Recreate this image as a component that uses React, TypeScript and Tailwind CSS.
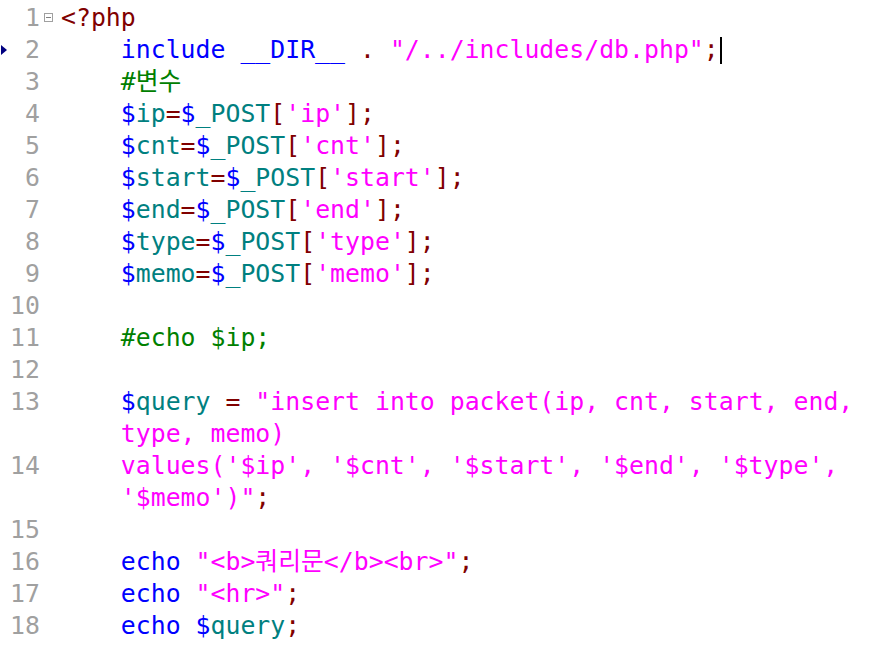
import React from "react";

type Tok = [string, string];

const R = "text-[#800000]";
const B = "text-[#0000ff]";
const T = "text-[#008080]";
const M = "text-[#ff00ff]";
const G = "text-[#008000]";

const post = (name: string, key: string): Tok[] => [
  ["$", B],
  [name, T],
  ["=", R],
  ["$", B],
  ["_POST", T],
  ["[", R],
  [`'${key}'`, M],
  ["];", R],
];

// each row: line number (or null for a wrapped row), indent, tokens
const rows: { n: number | null; ind: boolean; toks: Tok[] }[] = [
  { n: 1, ind: false, toks: [["<?php", R]] },
  {
    n: 2,
    ind: true,
    toks: [
      ["include __DIR__", B],
      [" ", B],
      [".", R],
      [" ", B],
      ['"/../includes/db.php"', M],
      [";", R],
    ],
  },
  { n: 3, ind: true, toks: [["#변수", G]] },
  { n: 4, ind: true, toks: post("ip", "ip") },
  { n: 5, ind: true, toks: post("cnt", "cnt") },
  { n: 6, ind: true, toks: post("start", "start") },
  { n: 7, ind: true, toks: post("end", "end") },
  { n: 8, ind: true, toks: post("type", "type") },
  { n: 9, ind: true, toks: post("memo", "memo") },
  { n: 10, ind: false, toks: [] },
  { n: 11, ind: true, toks: [["#echo $ip;", G]] },
  { n: 12, ind: false, toks: [] },
  {
    n: 13,
    ind: true,
    toks: [
      ["$", B],
      ["query", T],
      [" ", B],
      ["=", R],
      [" ", B],
      ['"insert into packet(ip, cnt, start, end,', M],
    ],
  },
  { n: null, ind: true, toks: [["type, memo)", M]] },
  {
    n: 14,
    ind: true,
    toks: [["values('$ip', '$cnt', '$start', '$end', '$type',", M]],
  },
  { n: null, ind: true, toks: [["'$memo')\"", M], [";", R]] },
  { n: 15, ind: false, toks: [] },
  {
    n: 16,
    ind: true,
    toks: [
      ["echo ", B],
      ['"<b>쿼리문</b><br>"', M],
      [";", R],
    ],
  },
  {
    n: 17,
    ind: true,
    toks: [
      ["echo ", B],
      ['"<hr>"', M],
      [";", R],
    ],
  },
  {
    n: 18,
    ind: true,
    toks: [
      ["echo ", B],
      ["$", B],
      ["query", T],
      [";", R],
    ],
  },
];

export default function App() {
  return (
    <div
      className="w-[869px] h-[648px] bg-white overflow-hidden pt-[2px] text-[24.83px] leading-[32px] whitespace-pre"
      style={{ fontFamily: '"DejaVu Sans Mono", "Noto Sans CJK KR", monospace' }}
    >
      {rows.map((row, i) => (
        <div key={i} className="flex h-[32px]">
          {/* bookmark arrow column */}
          <div className="w-[10px] flex items-center">
            {row.n === 2 && (
              <svg width="7" height="10" viewBox="0 0 7 10" className="ml-[1px]">
                <path d="M0 0 L6 5 L0 10 Z" fill="#000080" />
              </svg>
            )}
          </div>
          <div className="w-[30px] text-right text-[#a0a0a0]">{row.n ?? ""}</div>
          {/* fold column */}
          <div className="w-[21px] flex items-center">
            {row.n === 1 && (
              <svg width="9" height="9" viewBox="0 0 9 9" className="ml-[4px] -mt-[2px]">
                <rect x="0.5" y="0.5" width="8" height="8" fill="white" stroke="#a0a0a0" />
                <path d="M2 4.5 H7" stroke="#808080" />
              </svg>
            )}
          </div>
          <div className="flex items-center">
            <span>
              {row.ind && "    "}
              {row.toks.map(([t, c], j) => (
                <span key={j} className={c}>
                  {t}
                </span>
              ))}
            </span>
            {row.n === 2 && <span className="inline-block w-[2px] h-[27px] bg-black ml-[1px]" />}
          </div>
        </div>
      ))}
    </div>
  );
}
